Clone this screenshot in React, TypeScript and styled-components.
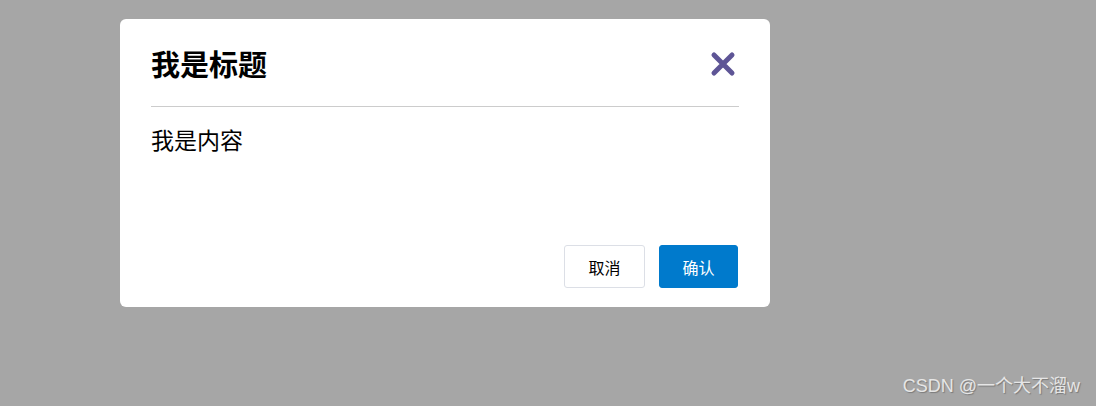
import React from "react";
import styled, { createGlobalStyle } from "styled-components";

const Global = createGlobalStyle`
  html, body { margin: 0; padding: 0; }
  body {
    background: #a6a6a6;
    font-family: "Liberation Sans", "Noto Sans CJK SC", sans-serif;
    width: 1096px;
    height: 406px;
    overflow: hidden;
  }
`;

const Overlay = styled.div`
  position: relative;
  width: 1096px;
  height: 406px;
  background: #a6a6a6;
  padding: 19px 0 0 120px;
  box-sizing: border-box;
`;

const Modal = styled.div`
  width: 650px;
  height: 288px;
  background: #fff;
  border-radius: 6px;
  display: flex;
  flex-direction: column;
  padding: 0 31px 19px 31px;
  box-sizing: border-box;
`;

const Header = styled.div`
  height: 88px;
  box-sizing: border-box;
  display: flex;
  align-items: center;
  justify-content: space-between;
  border-bottom: 1px solid #cccccc;
  padding-top: 2px;
`;

const Title = styled.h2`
  margin: 0;
  font-family: "Noto Sans CJK SC", sans-serif;
  font-size: 29px;
  font-weight: 700;
  color: #000;
  line-height: 1;
`;

const CloseButton = styled.button`
  border: none;
  background: none;
  padding: 0;
  margin-right: 3px;
  width: 26px;
  height: 26px;
  display: flex;
  cursor: pointer;
`;

const Body = styled.div`
  flex: 1;
  padding-top: 17px;
  font-family: "Noto Sans CJK SC", sans-serif;
  font-size: 23px;
  line-height: 30px;
  color: #000;
`;

const Footer = styled.div`
  display: flex;
  justify-content: flex-end;
  gap: 14px;
  padding-right: 1px;
`;

const Button = styled.button<{ $primary?: boolean }>`
  width: ${(p) => (p.$primary ? "79px" : "81px")};
  height: 43px;
  border-radius: 3px;
  border: 1px solid ${(p) => (p.$primary ? "#007acc" : "#dcdfe6")};
  background: ${(p) => (p.$primary ? "#007acc" : "#fff")};
  color: ${(p) => (p.$primary ? "#fff" : "#000")};
  font-family: "Noto Sans CJK SC", sans-serif;
  font-size: 16px;
  padding: 0;
  cursor: pointer;
`;

const Watermark = styled.div`
  position: absolute;
  right: 16px;
  bottom: 9px;
  font-family: "Liberation Sans", "Noto Sans CJK SC", sans-serif;
  font-size: 18px;
  color: #e6e6e6;
  text-shadow: 1px 1px 1px #7a7a7a;
  letter-spacing: 0;
`;

export default function App() {
  return (
    <>
      <Global />
      <Overlay>
        <Modal>
          <Header>
            <Title>我是标题</Title>
            <CloseButton aria-label="close">
              <svg width="26" height="26" viewBox="0 0 26 26">
                <path
                  d="M4 4 L22 22 M22 4 L4 22"
                  stroke="#5e5596"
                  strokeWidth="5"
                  strokeLinecap="round"
                  fill="none"
                />
              </svg>
            </CloseButton>
          </Header>
          <Body>我是内容</Body>
          <Footer>
            <Button>取消</Button>
            <Button $primary>确认</Button>
          </Footer>
        </Modal>
        <Watermark>CSDN @一个大不溜w</Watermark>
      </Overlay>
    </>
  );
}
